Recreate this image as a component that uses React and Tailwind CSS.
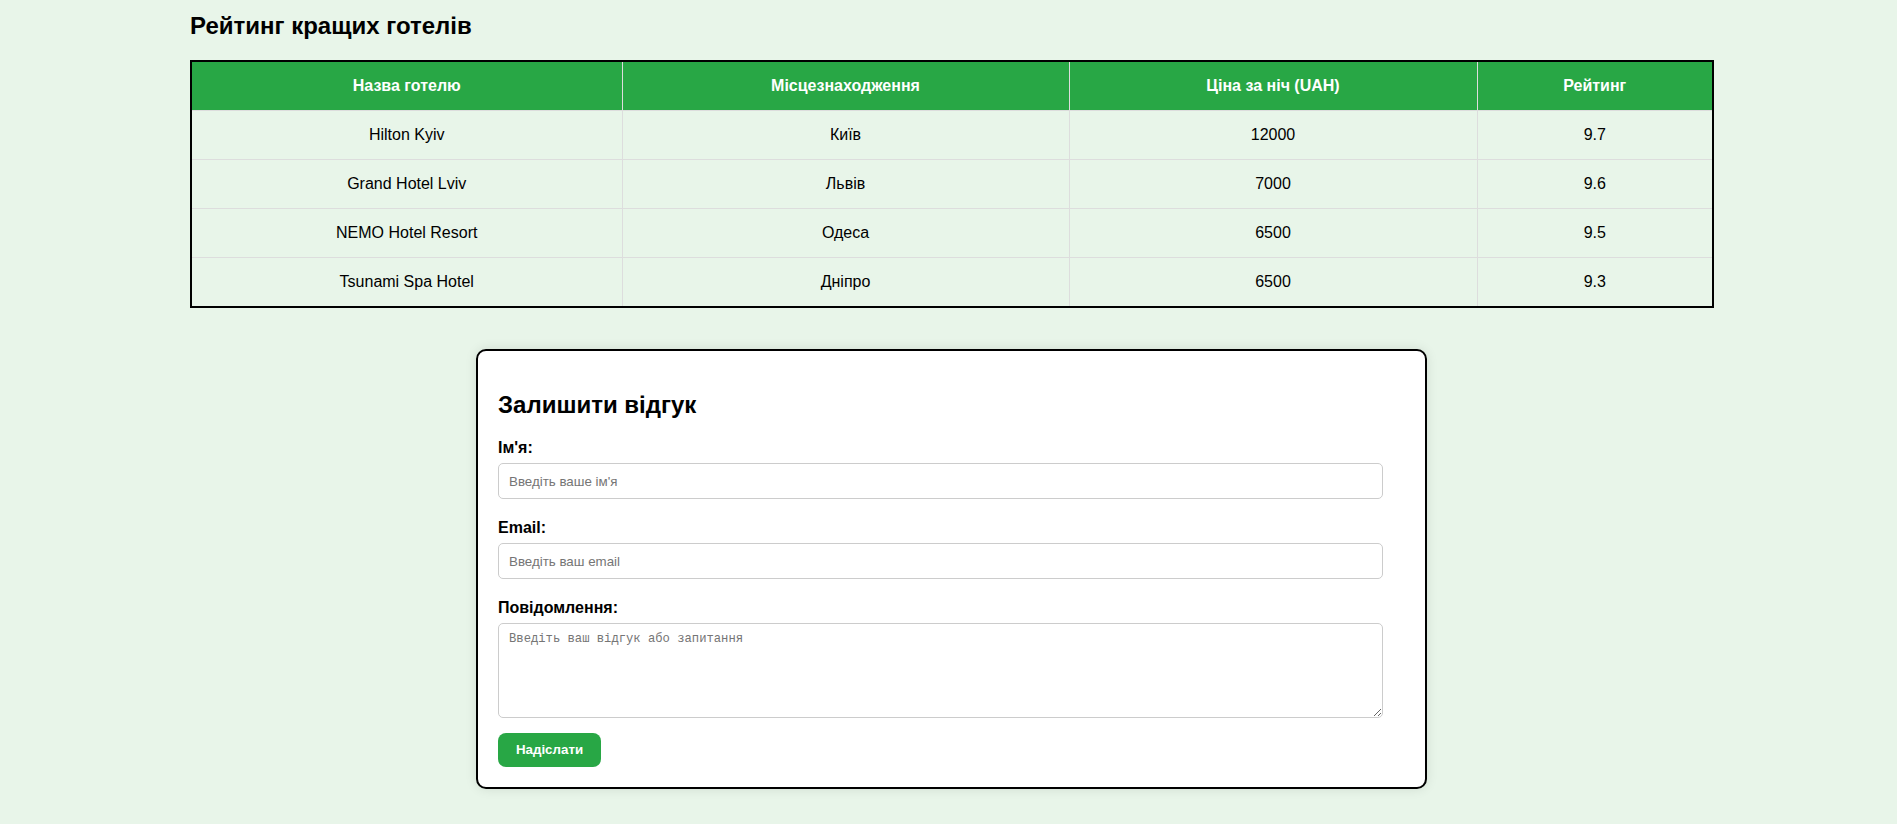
import React from "react";

const hotels = [
  { name: "Hilton Kyiv", city: "Київ", price: "12000", rating: "9.7" },
  { name: "Grand Hotel Lviv", city: "Львів", price: "7000", rating: "9.6" },
  { name: "NEMO Hotel Resort", city: "Одеса", price: "6500", rating: "9.5" },
  { name: "Tsunami Spa Hotel", city: "Дніпро", price: "6500", rating: "9.3" },
];

export default function App() {
  return (
    <div className="min-h-screen bg-[#e8f5e9] pt-[12px] pb-[36px] font-['Liberation_Sans',Arial,sans-serif] text-black">

      {/* Rating table */}
      <section className="ml-[190px] w-[1524px]">
        <h2 className="mb-[20px] text-[24px] font-bold leading-[28px]">Рейтинг кращих готелів</h2>
        <table className="w-full table-fixed border-collapse border-2 border-black text-center text-[16px] leading-[18px]">
          <colgroup>
            <col className="w-[431px]" />
            <col className="w-[447px]" />
            <col className="w-[408px]" />
            <col />
          </colgroup>
          <thead>
            <tr className="bg-[#28a745] text-white">
              <th className="border border-[#ddd] py-[15px] font-bold">Назва готелю</th>
              <th className="border border-[#ddd] py-[15px] font-bold">Місцезнаходження</th>
              <th className="border border-[#ddd] py-[15px] font-bold">Ціна за ніч (UAH)</th>
              <th className="border border-[#ddd] py-[15px] font-bold">Рейтинг</th>
            </tr>
          </thead>
          <tbody>
            {hotels.map((h) => (
              <tr key={h.name}>
                <td className="border border-[#ddd] py-[15px]">{h.name}</td>
                <td className="border border-[#ddd] py-[15px]">{h.city}</td>
                <td className="border border-[#ddd] py-[15px]">{h.price}</td>
                <td className="border border-[#ddd] py-[15px]">{h.rating}</td>
              </tr>
            ))}
          </tbody>
        </table>
      </section>

      {/* Feedback form */}
      <form
        className="mt-[41px] ml-[476px] w-[951px] rounded-[10px] border-2 border-black bg-white p-[20px] shadow-[0_0_12px_rgba(0,0,0,0.1)]"
        onSubmit={(e) => e.preventDefault()}
      >
        <h2 className="mt-[20px] mb-[20px] text-[24px] font-bold leading-[28px]">Залишити відгук</h2>

        <label className="mb-[6px] block text-[16px] font-bold leading-[18px]">Ім'я:</label>
        <input
          type="text"
          placeholder="Введіть ваше ім'я"
          className="mb-[20px] block h-[36px] w-[885px] rounded-[5px] border border-[#ccc] px-[10px] text-[13.33px] placeholder:text-[#757575] outline-none"
        />

        <label className="mb-[6px] block text-[16px] font-bold leading-[18px]">Email:</label>
        <input
          type="email"
          placeholder="Введіть ваш email"
          className="mb-[20px] block h-[36px] w-[885px] rounded-[5px] border border-[#ccc] px-[10px] text-[13.33px] placeholder:text-[#757575] outline-none"
        />

        <label className="mb-[6px] block text-[16px] font-bold leading-[18px]">Повідомлення:</label>
        <textarea
          placeholder="Введіть ваш відгук або запитання"
          className="mb-[15px] block h-[95px] w-[885px] rounded-[5px] border border-[#ccc] px-[10px] py-[8px] font-['Liberation_Mono',monospace] text-[12.2px] leading-[15px] placeholder:text-[#757575] outline-none"
        />

        <button
          type="submit"
          className="block h-[34px] w-[103px] rounded-[8px] bg-[#28a745] text-[13.33px] font-bold text-white"
        >
          Надіслати
        </button>
      </form>
    </div>
  );
}
